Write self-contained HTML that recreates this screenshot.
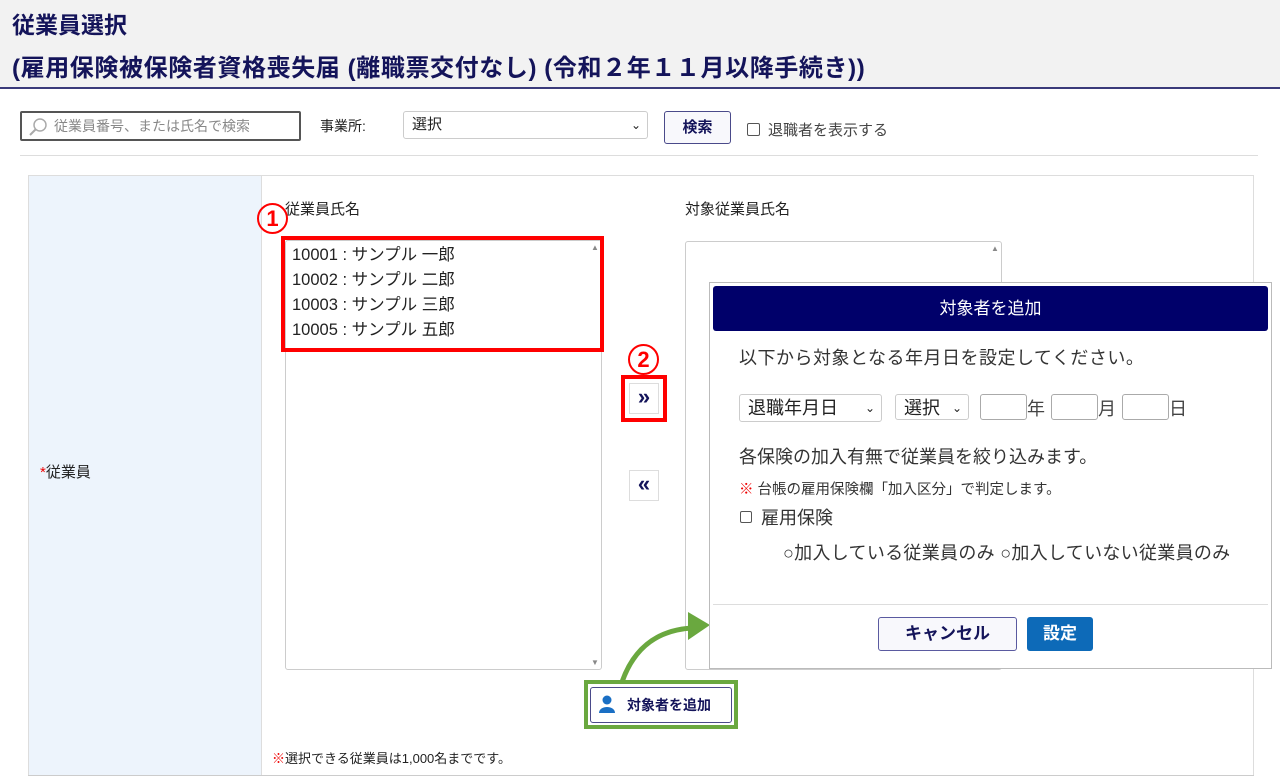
<!DOCTYPE html>
<html><head><meta charset="utf-8"><style>
*{box-sizing:border-box;margin:0;padding:0}
body{width:1280px;height:783px;background:#fff;font-family:"Liberation Sans","Noto Sans CJK JP",sans-serif;color:#222;position:relative;overflow:hidden}
.a{position:absolute}
.hdr{left:0;top:0;width:1280px;height:89px;background:#f2f2f2;border-bottom:2px solid #3a3a7a}
.t{color:#14145a;font-weight:bold;white-space:nowrap}
.sel{border:1px solid #ccc;border-radius:3px;background:#fff;font-size:15px;padding-left:8px;line-height:26px}
.chev{position:absolute;right:6px;top:0;font-size:12px}
</style></head><body>
<div class="a hdr"></div>
<div class="a t" style="left:12px;top:6px;font-size:23px">従業員選択</div>
<div class="a t" style="left:12px;top:48px;font-size:24px;letter-spacing:0.6px">(雇用保険被保険者資格喪失届 (離職票交付なし) (令和２年１１月以降手続き))</div>

<div class="a" style="left:20px;top:111px;width:281px;height:30px;border:2px solid #555;border-radius:2px;font-size:14px;color:#888;line-height:26px;padding-left:32px">従業員番号、または氏名で検索</div>
<svg class="a" style="left:28px;top:117px" width="20" height="20"><circle cx="12" cy="8" r="6" fill="none" stroke="#aaa" stroke-width="1.5"/><line x1="7.5" y1="12.5" x2="2" y2="18" stroke="#aaa" stroke-width="2"/></svg>
<div class="a" style="left:320px;top:116px;font-size:14px">事業所:</div>
<div class="a sel" style="left:403px;top:111px;width:245px;height:28px">選択<span class="chev">&#8964;</span></div>
<div class="a" style="left:664px;top:111px;width:67px;height:33px;border:1px solid #4a4a8a;border-radius:3px;background:#f8f8fc;color:#14145a;font-weight:bold;font-size:15px;text-align:center;line-height:31px">検索</div>
<div class="a" style="left:747px;top:123px;width:13px;height:13px;border:1px solid #555;border-radius:2px"></div>
<div class="a" style="left:768px;top:119px;font-size:15px;color:#444">退職者を表示する</div>
<div class="a" style="left:20px;top:155px;width:1238px;height:1px;background:#ddd"></div>

<div class="a" style="left:28px;top:175px;width:1226px;height:601px;border:1px solid #ddd"></div>
<div class="a" style="left:29px;top:176px;width:233px;height:599px;background:#edf4fc;border-right:1px solid #ddd"></div>
<div class="a" style="left:28px;top:775px;width:1226px;height:1px;background:#ccc"></div>
<div class="a" style="left:40px;top:461px;font-size:15px"><span style="color:#e00">*</span>従業員</div>

<div class="a" style="left:285px;top:198px;font-size:15px">従業員氏名</div>
<div class="a" style="left:685px;top:198px;font-size:15px">対象従業員氏名</div>
<div class="a" style="left:285px;top:240px;width:317px;height:430px;border:1px solid #ccc;border-radius:3px"></div>
<div class="a" style="left:685px;top:241px;width:317px;height:429px;border:1px solid #ccc;border-radius:3px"></div>
<div class="a" style="left:591px;top:243px;font-size:8px;color:#888">▲</div>
<div class="a" style="left:591px;top:658px;font-size:8px;color:#888">▼</div>
<div class="a" style="left:991px;top:244px;font-size:8px;color:#888">▲</div>
<div class="a" style="left:281px;top:236px;width:323px;height:116px;border:4px solid #f00"></div>
<div class="a" style="left:292px;top:243px;font-size:16.5px;line-height:25px">10001 : サンプル 一郎<br>10002 : サンプル 二郎<br>10003 : サンプル 三郎<br>10005 : サンプル 五郎</div>
<div class="a" style="left:257px;top:203px;width:31px;height:31px;border:2px solid #f00;border-radius:50%;color:#f00;font-weight:bold;font-size:22px;text-align:center;line-height:27px">1</div>

<div class="a" style="left:628px;top:344px;width:31px;height:31px;border:2px solid #f00;border-radius:50%;color:#f00;font-weight:bold;font-size:22px;text-align:center;line-height:27px">2</div>
<div class="a" style="left:621px;top:375px;width:46px;height:47px;border:4px solid #f00"></div>
<div class="a" style="left:629px;top:383px;width:30px;height:31px;border:1px solid #ddd;background:#fff;color:#14145a;font-weight:bold;font-size:22px;text-align:center;line-height:26px">»</div>
<div class="a" style="left:629px;top:470px;width:30px;height:31px;border:1px solid #ddd;background:#fff;color:#14145a;font-weight:bold;font-size:22px;text-align:center;line-height:26px">«</div>

<svg class="a" style="left:600px;top:600px" width="120" height="90"><path d="M22 82 C35 45 60 30 92 28" fill="none" stroke="#6aa83f" stroke-width="5"/><polygon points="88,12 110,25 88,40" fill="#6aa83f"/></svg>
<div class="a" style="left:584px;top:680px;width:154px;height:49px;border:4px solid #6aa83f"></div>
<div class="a" style="left:590px;top:687px;width:142px;height:36px;border:1px solid #4a4a8a;border-radius:3px;background:#fff;color:#14145a;font-weight:bold;font-size:14px;line-height:34px;padding-left:36px">対象者を追加</div>
<svg class="a" style="left:597px;top:694px" width="20" height="20"><circle cx="10" cy="6" r="4.5" fill="#1a6fc4"/><path d="M2 19 C2 11 18 11 18 19Z" fill="#1a6fc4"/></svg>
<div class="a" style="left:272px;top:748px;font-size:13px"><span style="color:#e00">※</span>選択できる従業員は1,000名までです。</div>

<div class="a" style="left:709px;top:282px;width:563px;height:387px;border:1px solid #bbb;background:#fff"></div>
<div class="a" style="left:713px;top:286px;width:555px;height:45px;background:#00006a;border-radius:3px;color:#fff;font-size:17px;text-align:center;line-height:45px">対象者を追加</div>
<div class="a" style="left:739px;top:344px;font-size:18px;letter-spacing:0.5px;color:#333">以下から対象となる年月日を設定してください。</div>
<div class="a sel" style="left:739px;top:394px;width:143px;height:28px;font-size:18px">退職年月日<span class="chev">&#8964;</span></div>
<div class="a sel" style="left:895px;top:394px;width:74px;height:26px;font-size:18px">選択<span class="chev">&#8964;</span></div>
<div class="a" style="left:980px;top:394px;width:47px;height:26px;border:1px solid #aaa;border-radius:3px"></div>
<div class="a" style="left:1027px;top:395px;font-size:18px;color:#444">年</div>
<div class="a" style="left:1051px;top:394px;width:47px;height:26px;border:1px solid #aaa;border-radius:3px"></div>
<div class="a" style="left:1098px;top:395px;font-size:18px;color:#444">月</div>
<div class="a" style="left:1122px;top:394px;width:47px;height:26px;border:1px solid #aaa;border-radius:3px"></div>
<div class="a" style="left:1169px;top:395px;font-size:18px;color:#444">日</div>
<div class="a" style="left:739px;top:443px;font-size:18px;color:#333">各保険の加入有無で従業員を絞り込みます。</div>
<div class="a" style="left:739px;top:478px;font-size:14.5px;color:#333"><span style="color:#e00">※</span> 台帳の雇用保険欄「加入区分」で判定します。</div>
<div class="a" style="left:740px;top:511px;width:12px;height:12px;border:1px solid #555;border-radius:2px"></div>
<div class="a" style="left:761px;top:504px;font-size:18px;color:#333">雇用保険</div>
<div class="a" style="left:783px;top:539px;font-size:18px;color:#333;letter-spacing:0.3px;white-space:nowrap">○加入している従業員のみ ○加入していない従業員のみ</div>
<div class="a" style="left:713px;top:604px;width:555px;height:1px;background:#ddd"></div>
<div class="a" style="left:878px;top:617px;width:139px;height:34px;border:1px solid #5a5aa0;border-radius:3px;background:#f8f8fc;color:#14145a;font-weight:bold;font-size:17px;text-align:center;line-height:32px">キャンセル</div>
<div class="a" style="left:1027px;top:617px;width:66px;height:34px;border-radius:3px;background:#0d6ab8;color:#fff;font-weight:bold;font-size:17px;text-align:center;line-height:34px">設定</div>
</body></html>
